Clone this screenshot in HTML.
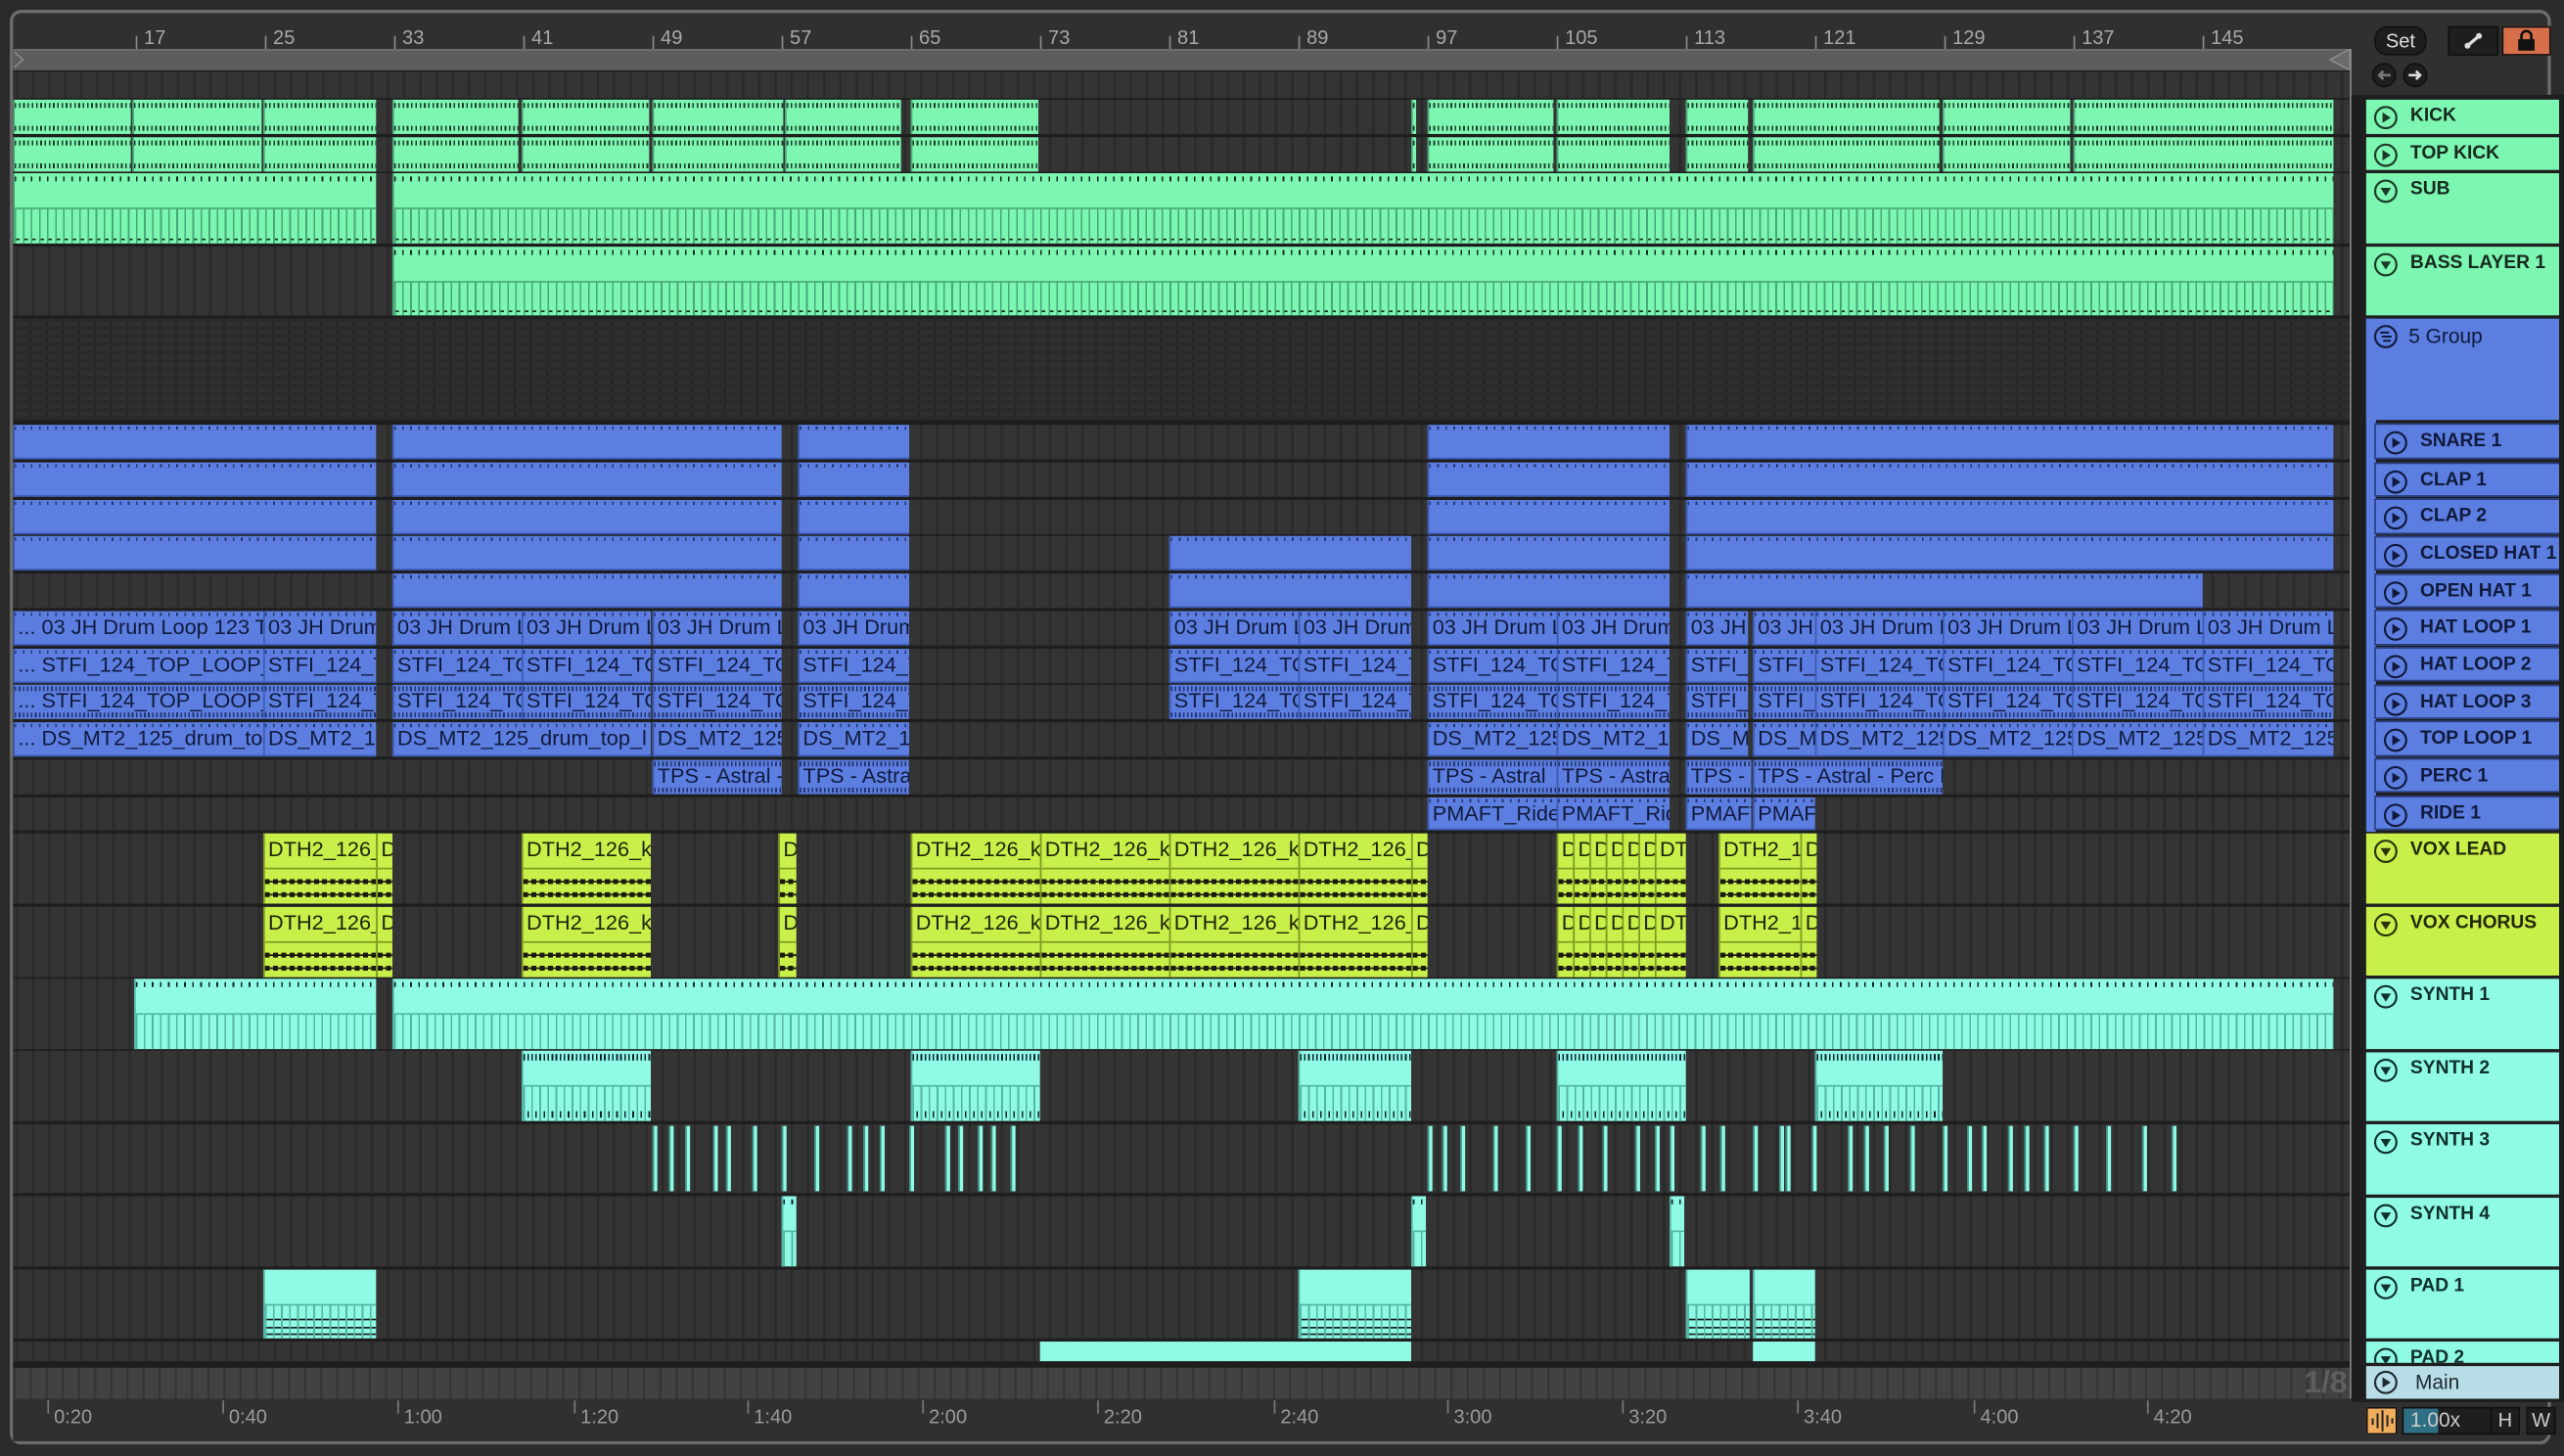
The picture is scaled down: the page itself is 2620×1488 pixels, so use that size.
<!DOCTYPE html>
<html><head><meta charset="utf-8"><style>
*{margin:0;padding:0}
i{font-style:normal}
html,body{width:2620px;height:1488px;overflow:hidden;background:#2b2b2b}
#s{position:absolute;left:0;top:0;width:1568px;height:891px;transform:scale(1.67092,1.67);transform-origin:0 0;font-family:"Liberation Sans",sans-serif}
.frame{position:absolute;left:6px;top:6px;width:1554px;height:878px;border:2px solid #6c6c6c;border-radius:7px;background:#303030;box-sizing:border-box}
.lbl{position:absolute;top:16px;font-size:12px;color:#a8a8a8}
.lbl:before{content:"";position:absolute;left:-5px;top:6px;width:1px;height:8px;background:#8a8a8a}
.loop{position:absolute;left:8px;top:30px;width:1430px;height:12px;background:#5d5d5d;border-top:1px solid #6f6f6f;border-bottom:1px solid #7a7a7a}
.area{position:absolute;left:8px;top:43px;width:1430px;height:814px;background:#1e1e1e;overflow:hidden}
.row{position:absolute;left:0;width:1430px;background:repeating-linear-gradient(90deg,#2a2a2a 0 1.6px,#343434 1.6px 9.875px);background-position:1.5px 0}
.c{position:absolute;top:0;bottom:0;overflow:hidden;box-sizing:border-box;white-space:nowrap;font-style:normal}
.g{background:repeating-linear-gradient(90deg,#1b3a27 0 1px,transparent 1px 2.6px) 0 2px/100% 3px no-repeat,repeating-linear-gradient(90deg,#1b3a27 0 1px,transparent 1px 2.6px) 0 calc(100% - 2px)/100% 3px no-repeat,#7cf6b0;border-left:1px solid #4aa878}
.gh{background:linear-gradient(#47a877,#47a877) 0 50%/100% 1px no-repeat,repeating-linear-gradient(90deg,#47a877 0 1px,transparent 1px 4.94px) 0 100%/100% 50% no-repeat,repeating-linear-gradient(90deg,#152a1e 0 1px,transparent 1px 4.94px) 0 2px/100% 3px no-repeat,repeating-linear-gradient(90deg,#152a1e 0 3px,transparent 3px 4.94px) 0 calc(100% - 2px)/100% 1px no-repeat,#7cf6b0;border-left:1px solid #4aa878}
.b{background:repeating-linear-gradient(90deg,#24346f 0 1px,transparent 1px 4.94px) 0 1px/100% 2px no-repeat,#5b7ee0;border-left:1px solid #3c5bb5;border-bottom:1px solid #3c5bb5}
.bt{background:repeating-linear-gradient(90deg,#24346f 0 1px,transparent 1px 2.47px) 0 1px/100% 3px no-repeat,repeating-linear-gradient(90deg,#24346f 0 1px,transparent 1px 2.47px) 0 calc(100% - 1px)/100% 3px no-repeat,#5b7ee0;border-left:1px solid #3c5bb5}
.b span,.bt span{position:absolute;left:2px;top:3px;font-family:"Liberation Sans Narrow","Liberation Sans",sans-serif;font-size:13px;line-height:14px;color:#111a3c;font-style:normal}
.y{background:linear-gradient(#7c9a22,#7c9a22) 0 21px/100% 1px no-repeat,repeating-linear-gradient(90deg,#1a1a10 0 3px,transparent 3px 5px) 0 28px/100% 3px no-repeat,repeating-linear-gradient(90deg,#1a1a10 0 3px,transparent 3px 5px) 0 36px/100% 3px no-repeat,linear-gradient(#1a1a10,#1a1a10) 0 29px/100% 1px no-repeat,linear-gradient(#1a1a10,#1a1a10) 0 37px/100% 1px no-repeat,#c9ef4a;border-left:1px solid #7c9a22}
.y span{position:absolute;left:2px;top:3px;font-family:"Liberation Sans Narrow","Liberation Sans",sans-serif;font-size:13px;line-height:14px;color:#1d2208;font-style:normal}
.t{background:linear-gradient(#54b5a4,#54b5a4) 0 50%/100% 1px no-repeat,repeating-linear-gradient(90deg,#54b5a4 0 1px,transparent 1px 4.94px) 0 100%/100% 50% no-repeat,repeating-linear-gradient(90deg,#123 0 1px,transparent 1px 4.94px) 0 2px/100% 3px no-repeat,#8ffbe5;border-left:1px solid #54b5a4}
.t2{background:linear-gradient(#54b5a4,#54b5a4) 0 50%/100% 1px no-repeat,repeating-linear-gradient(90deg,#54b5a4 0 1px,transparent 1px 4.94px) 0 100%/100% 50% no-repeat,repeating-linear-gradient(90deg,#123 0 1px,transparent 1px 2.47px) 0 2px/100% 4px no-repeat,repeating-linear-gradient(90deg,#123 0 1px,transparent 1px 2.47px) 0 calc(100% - 2px)/100% 4px no-repeat,#8ffbe5;border-left:1px solid #54b5a4}
.tp{background:linear-gradient(#54b5a4,#54b5a4) 0 50%/100% 1px no-repeat,repeating-linear-gradient(90deg,#54b5a4 0 1px,transparent 1px 4.94px) 0 100%/100% 50% no-repeat,linear-gradient(#1a1a1a,#1a1a1a) 0 30px/100% 1px no-repeat,linear-gradient(#1a1a1a,#1a1a1a) 0 35px/100% 1px no-repeat,linear-gradient(#1a1a1a,#1a1a1a) 0 39px/100% 1px no-repeat,#8ffbe5;border-left:1px solid #54b5a4}
.sl{position:absolute;top:1px;bottom:1px;width:2px;background:#8ffbe5;border-left:1px solid #3f8a7e}
.hd{position:absolute;left:1447px;width:118px;box-sizing:border-box;font-weight:bold;font-size:11.5px;color:#17291f;letter-spacing:0;overflow:hidden;white-space:nowrap}
.hd svg{position:absolute;left:4px;top:3px}
.hd b{position:absolute;left:27px;top:4px}
.sub{left:1452px;width:113px}
.bl{background:#5b7ee0;color:#111a3c}
.gr{background:#7cf6b0}
.ye{background:#c9ef4a;color:#222806}
.cy{background:#8ffbe5;color:#10302b}
.tl{position:absolute;top:860px;font-size:12px;color:#9a9a9a}
.tl:before{content:"";position:absolute;left:-4px;top:-3px;width:1px;height:8px;background:#7a7a7a}
</style></head><body><div id="s">
<div class="frame"></div>
<div class="lbl" style="left:88px">17</div><div class="lbl" style="left:167px">25</div><div class="lbl" style="left:246px">33</div><div class="lbl" style="left:325px">41</div><div class="lbl" style="left:404px">49</div><div class="lbl" style="left:483px">57</div><div class="lbl" style="left:562px">65</div><div class="lbl" style="left:641px">73</div><div class="lbl" style="left:720px">81</div><div class="lbl" style="left:799px">89</div><div class="lbl" style="left:878px">97</div><div class="lbl" style="left:957px">105</div><div class="lbl" style="left:1036px">113</div><div class="lbl" style="left:1115px">121</div><div class="lbl" style="left:1194px">129</div><div class="lbl" style="left:1273px">137</div><div class="lbl" style="left:1352px">145</div>
<div class="loop"></div>
<svg style="position:absolute;left:8px;top:31px" width="8" height="11"><path d="M1 1 L6 5.5 L1 10" fill="none" stroke="#8a8a8a"/></svg>
<svg style="position:absolute;left:1424px;top:30px" width="14" height="13"><path d="M13 0 L1 6.5 L13 13 Z" fill="#6a6a6a" stroke="#8a8a8a"/></svg>
<div class="area">
<div class="row" style="top:1px;height:16px"></div>
<div class="row" style="top:18px;height:21px">
<i class="c g" style="left:0;width:72px"></i><i class="c g" style="left:73px;width:79px"></i><i class="c g" style="left:153px;width:69px"></i><i class="c g" style="left:232px;width:77px"></i><i class="c g" style="left:311px;width:78px"></i><i class="c g" style="left:391px;width:80px"></i><i class="c g" style="left:472px;width:71px"></i><i class="c g" style="left:549px;width:78px"></i><i class="c g" style="left:855px;width:3px"></i><i class="c g" style="left:865px;width:77px"></i><i class="c g" style="left:944px;width:69px"></i><i class="c g" style="left:1023px;width:38px"></i><i class="c g" style="left:1064px;width:114px"></i><i class="c g" style="left:1180px;width:78px"></i><i class="c g" style="left:1260px;width:159px"></i></div>
<div class="row" style="top:41px;height:21px">
<i class="c g" style="left:0;width:72px"></i><i class="c g" style="left:73px;width:79px"></i><i class="c g" style="left:153px;width:69px"></i><i class="c g" style="left:232px;width:77px"></i><i class="c g" style="left:311px;width:78px"></i><i class="c g" style="left:391px;width:80px"></i><i class="c g" style="left:472px;width:71px"></i><i class="c g" style="left:549px;width:78px"></i><i class="c g" style="left:855px;width:3px"></i><i class="c g" style="left:865px;width:77px"></i><i class="c g" style="left:944px;width:69px"></i><i class="c g" style="left:1023px;width:38px"></i><i class="c g" style="left:1064px;width:114px"></i><i class="c g" style="left:1180px;width:78px"></i><i class="c g" style="left:1260px;width:159px"></i></div>
<div class="row" style="top:63px;height:43px"><i class="c gh" style="left:0;width:222px"></i><i class="c gh" style="left:232px;width:1187px"></i></div>
<div class="row" style="top:108px;height:42px"><i class="c gh" style="left:232px;width:1187px"></i></div>
<div class="row" style="top:152px;height:62px;background:repeating-linear-gradient(#2a2a2a 0 2px,transparent 2px 5px),repeating-linear-gradient(90deg,#262626 0 1.6px,#2f2f2f 1.6px 9.875px)"></div>
<div class="row" style="top:217px;height:21px"><i class="c b" style="left:0;width:222px"></i><i class="c b" style="left:232px;width:238px"></i><i class="c b" style="left:480px;width:68px"></i><i class="c b" style="left:865px;width:148px"></i><i class="c b" style="left:1023px;width:396px"></i></div>
<div class="row" style="top:240px;height:21px"><i class="c b" style="left:0;width:222px"></i><i class="c b" style="left:232px;width:238px"></i><i class="c b" style="left:480px;width:68px"></i><i class="c b" style="left:865px;width:148px"></i><i class="c b" style="left:1023px;width:396px"></i></div>
<div class="row" style="top:263px;height:21px"><i class="c b" style="left:0;width:222px"></i><i class="c b" style="left:232px;width:238px"></i><i class="c b" style="left:480px;width:68px"></i><i class="c b" style="left:865px;width:148px"></i><i class="c b" style="left:1023px;width:396px"></i></div>
<div class="row" style="top:285px;height:21px"><i class="c b" style="left:0;width:222px"></i><i class="c b" style="left:232px;width:238px"></i><i class="c b" style="left:480px;width:68px"></i><i class="c b" style="left:707px;width:148px"></i><i class="c b" style="left:865px;width:148px"></i><i class="c b" style="left:1023px;width:396px"></i></div>
<div class="row" style="top:308px;height:21px"><i class="c b" style="left:232px;width:238px"></i><i class="c b" style="left:480px;width:68px"></i><i class="c b" style="left:707px;width:148px"></i><i class="c b" style="left:865px;width:148px"></i><i class="c b" style="left:1023px;width:316px"></i></div>
<div class="row" style="top:331px;height:21px">
<i class="c b" style="left:0;width:153px"><span>... 03 JH Drum Loop 123 To</span></i><i class="c b" style="left:153px;width:69px"><span>03 JH Drum</span></i><i class="c b" style="left:232px;width:79px"><span>03 JH Drum L</span></i><i class="c b" style="left:311px;width:79px"><span>03 JH Drum L</span></i><i class="c b" style="left:391px;width:79px"><span>03 JH Drum L</span></i><i class="c b" style="left:480px;width:68px"><span>03 JH Drum</span></i><i class="c b" style="left:707px;width:79px"><span>03 JH Drum L</span></i><i class="c b" style="left:786px;width:69px"><span>03 JH Drum</span></i><i class="c b" style="left:865px;width:79px"><span>03 JH Drum L</span></i><i class="c b" style="left:944px;width:69px"><span>03 JH Drum</span></i><i class="c b" style="left:1023px;width:38px"><span>03 JH</span></i><i class="c b" style="left:1064px;width:38px"><span>03 JH</span></i><i class="c b" style="left:1102px;width:78px"><span>03 JH Drum L</span></i><i class="c b" style="left:1180px;width:79px"><span>03 JH Drum L</span></i><i class="c b" style="left:1259px;width:80px"><span>03 JH Drum L</span></i><i class="c b" style="left:1339px;width:80px"><span>03 JH Drum L</span></i></div>
<div class="row" style="top:354px;height:21px">
<i class="c b" style="left:0;width:153px"><span>... STFI_124_TOP_LOOP_T</span></i><i class="c b" style="left:153px;width:69px"><span>STFI_124_T</span></i><i class="c b" style="left:232px;width:79px"><span>STFI_124_TO</span></i><i class="c b" style="left:311px;width:79px"><span>STFI_124_TO</span></i><i class="c b" style="left:391px;width:79px"><span>STFI_124_TO</span></i><i class="c b" style="left:480px;width:68px"><span>STFI_124_T</span></i><i class="c b" style="left:707px;width:79px"><span>STFI_124_TO</span></i><i class="c b" style="left:786px;width:69px"><span>STFI_124_T</span></i><i class="c b" style="left:865px;width:79px"><span>STFI_124_TO</span></i><i class="c b" style="left:944px;width:69px"><span>STFI_124_T</span></i><i class="c b" style="left:1023px;width:38px"><span>STFI_1</span></i><i class="c b" style="left:1064px;width:38px"><span>STFI_</span></i><i class="c b" style="left:1102px;width:78px"><span>STFI_124_TO</span></i><i class="c b" style="left:1180px;width:79px"><span>STFI_124_TO</span></i><i class="c b" style="left:1259px;width:80px"><span>STFI_124_TO</span></i><i class="c b" style="left:1339px;width:80px"><span>STFI_124_TO</span></i></div>
<div class="row" style="top:376px;height:21px">
<i class="c bt" style="left:0;width:153px"><span>... STFI_124_TOP_LOOP_T</span></i><i class="c bt" style="left:153px;width:69px"><span>STFI_124_T</span></i><i class="c bt" style="left:232px;width:79px"><span>STFI_124_TO</span></i><i class="c bt" style="left:311px;width:79px"><span>STFI_124_TO</span></i><i class="c bt" style="left:391px;width:79px"><span>STFI_124_TO</span></i><i class="c bt" style="left:480px;width:68px"><span>STFI_124_T</span></i><i class="c bt" style="left:707px;width:79px"><span>STFI_124_TO</span></i><i class="c bt" style="left:786px;width:69px"><span>STFI_124_T</span></i><i class="c bt" style="left:865px;width:79px"><span>STFI_124_TO</span></i><i class="c bt" style="left:944px;width:69px"><span>STFI_124_T</span></i><i class="c bt" style="left:1023px;width:38px"><span>STFI_1</span></i><i class="c bt" style="left:1064px;width:38px"><span>STFI_</span></i><i class="c bt" style="left:1102px;width:78px"><span>STFI_124_TO</span></i><i class="c bt" style="left:1180px;width:79px"><span>STFI_124_TO</span></i><i class="c bt" style="left:1259px;width:80px"><span>STFI_124_TO</span></i><i class="c bt" style="left:1339px;width:80px"><span>STFI_124_TO</span></i></div>
<div class="row" style="top:399px;height:21px">
<i class="c b" style="left:0;width:153px"><span>... DS_MT2_125_drum_top</span></i><i class="c b" style="left:153px;width:69px"><span>DS_MT2_12</span></i><i class="c b" style="left:232px;width:158px"><span>DS_MT2_125_drum_top_l</span></i><i class="c b" style="left:391px;width:79px"><span>DS_MT2_125</span></i><i class="c b" style="left:480px;width:68px"><span>DS_MT2_12</span></i><i class="c b" style="left:865px;width:79px"><span>DS_MT2_125</span></i><i class="c b" style="left:944px;width:69px"><span>DS_MT2_12</span></i><i class="c b" style="left:1023px;width:38px"><span>DS_M</span></i><i class="c b" style="left:1064px;width:38px"><span>DS_M</span></i><i class="c b" style="left:1102px;width:78px"><span>DS_MT2_125</span></i><i class="c b" style="left:1180px;width:79px"><span>DS_MT2_125</span></i><i class="c b" style="left:1259px;width:80px"><span>DS_MT2_125</span></i><i class="c b" style="left:1339px;width:80px"><span>DS_MT2_125</span></i></div>
<div class="row" style="top:422px;height:21px">
<i class="c bt" style="left:391px;width:79px"><span>TPS - Astral -</span></i><i class="c bt" style="left:480px;width:68px"><span>TPS - Astra</span></i><i class="c bt" style="left:865px;width:79px"><span>TPS - Astral</span></i><i class="c bt" style="left:944px;width:69px"><span>TPS - Astra</span></i><i class="c bt" style="left:1023px;width:40px"><span>TPS - /</span></i><i class="c bt" style="left:1064px;width:116px"><span>TPS - Astral - Perc L</span></i></div>
<div class="row" style="top:445px;height:20px">
<i class="c b" style="left:865px;width:79px"><span>PMAFT_Ride</span></i><i class="c b" style="left:944px;width:69px"><span>PMAFT_Rid</span></i><i class="c b" style="left:1023px;width:40px"><span>PMAFT</span></i><i class="c b" style="left:1064px;width:38px"><span>PMAF</span></i></div>
<div class="row" style="top:467px;height:43px">
<i class="c y" style="left:153px;width:69px"><span>DTH2_126_</span></i><i class="c y" style="left:222px;width:10px"><span>D</span></i><i class="c y" style="left:311px;width:79px"><span>DTH2_126_ki</span></i><i class="c y" style="left:468px;width:11px"><span>D</span></i><i class="c y" style="left:549px;width:79px"><span>DTH2_126_ki</span></i><i class="c y" style="left:628px;width:79px"><span>DTH2_126_ki</span></i><i class="c y" style="left:707px;width:79px"><span>DTH2_126_ki</span></i><i class="c y" style="left:786px;width:69px"><span>DTH2_126_</span></i><i class="c y" style="left:855px;width:10px"><span>D</span></i><i class="c y" style="left:944px;width:10px"><span>D</span></i><i class="c y" style="left:954px;width:10px"><span>D</span></i><i class="c y" style="left:964px;width:10px"><span>D</span></i><i class="c y" style="left:974px;width:10px"><span>D</span></i><i class="c y" style="left:984px;width:10px"><span>D</span></i><i class="c y" style="left:994px;width:10px"><span>D</span></i><i class="c y" style="left:1004px;width:19px"><span>DT</span></i><i class="c y" style="left:1043px;width:50px"><span>DTH2_1</span></i><i class="c y" style="left:1093px;width:10px"><span>D</span></i></div>
<div class="row" style="top:512px;height:43px">
<i class="c y" style="left:153px;width:69px"><span>DTH2_126_</span></i><i class="c y" style="left:222px;width:10px"><span>D</span></i><i class="c y" style="left:311px;width:79px"><span>DTH2_126_ki</span></i><i class="c y" style="left:468px;width:11px"><span>D</span></i><i class="c y" style="left:549px;width:79px"><span>DTH2_126_ki</span></i><i class="c y" style="left:628px;width:79px"><span>DTH2_126_ki</span></i><i class="c y" style="left:707px;width:79px"><span>DTH2_126_ki</span></i><i class="c y" style="left:786px;width:69px"><span>DTH2_126_</span></i><i class="c y" style="left:855px;width:10px"><span>D</span></i><i class="c y" style="left:944px;width:10px"><span>D</span></i><i class="c y" style="left:954px;width:10px"><span>D</span></i><i class="c y" style="left:964px;width:10px"><span>D</span></i><i class="c y" style="left:974px;width:10px"><span>D</span></i><i class="c y" style="left:984px;width:10px"><span>D</span></i><i class="c y" style="left:994px;width:10px"><span>D</span></i><i class="c y" style="left:1004px;width:19px"><span>DT</span></i><i class="c y" style="left:1043px;width:50px"><span>DTH2_1</span></i><i class="c y" style="left:1093px;width:10px"><span>D</span></i></div>
<div class="row" style="top:556px;height:43px"><i class="c t" style="left:74px;width:148px"></i><i class="c t" style="left:232px;width:1187px"></i></div>
<div class="row" style="top:600px;height:43px"><i class="c t2" style="left:311px;width:79px"></i><i class="c t2" style="left:549px;width:79px"></i><i class="c t2" style="left:786px;width:69px"></i><i class="c t2" style="left:944px;width:79px"></i><i class="c t2" style="left:1102px;width:78px"></i></div>
<div class="row" style="top:645px;height:42px">
<i class="sl" style="left:391px"></i><i class="sl" style="left:401px"></i><i class="sl" style="left:411px"></i><i class="sl" style="left:428px"></i><i class="sl" style="left:436px"></i><i class="sl" style="left:452px"></i><i class="sl" style="left:470px"></i><i class="sl" style="left:490px"></i><i class="sl" style="left:510px"></i><i class="sl" style="left:520px"></i><i class="sl" style="left:530px"></i><i class="sl" style="left:548px"></i><i class="sl" style="left:570px"></i><i class="sl" style="left:578px"></i><i class="sl" style="left:590px"></i><i class="sl" style="left:598px"></i><i class="sl" style="left:610px"></i><i class="sl" style="left:865px"></i><i class="sl" style="left:874px"></i><i class="sl" style="left:885px"></i><i class="sl" style="left:905px"></i><i class="sl" style="left:925px"></i><i class="sl" style="left:944px"></i><i class="sl" style="left:957px"></i><i class="sl" style="left:972px"></i><i class="sl" style="left:992px"></i><i class="sl" style="left:1004px"></i><i class="sl" style="left:1013px"></i><i class="sl" style="left:1032px"></i><i class="sl" style="left:1044px"></i><i class="sl" style="left:1064px"></i><i class="sl" style="left:1080px"></i><i class="sl" style="left:1084px"></i><i class="sl" style="left:1100px"></i><i class="sl" style="left:1122px"></i><i class="sl" style="left:1132px"></i><i class="sl" style="left:1144px"></i><i class="sl" style="left:1160px"></i><i class="sl" style="left:1180px"></i><i class="sl" style="left:1195px"></i><i class="sl" style="left:1204px"></i><i class="sl" style="left:1220px"></i><i class="sl" style="left:1230px"></i><i class="sl" style="left:1242px"></i><i class="sl" style="left:1260px"></i><i class="sl" style="left:1280px"></i><i class="sl" style="left:1302px"></i><i class="sl" style="left:1320px"></i></div>
<div class="row" style="top:689px;height:43px"><i class="c t" style="left:470px;width:9px"></i><i class="c t" style="left:855px;width:9px"></i><i class="c t" style="left:1013px;width:9px"></i></div>
<div class="row" style="top:734px;height:42px"><i class="c tp" style="left:153px;width:69px"></i><i class="c tp" style="left:786px;width:69px"></i><i class="c tp" style="left:1023px;width:39px"></i><i class="c tp" style="left:1064px;width:38px"></i></div>
<div class="row" style="top:778px;height:12px"><i class="c" style="left:628px;width:227px;background:#8ffbe5"></i><i class="c" style="left:1064px;width:38px;background:#8ffbe5"></i></div>
<div class="row" style="top:794px;height:19px;background:repeating-linear-gradient(90deg,#363636 0 1.6px,#424242 1.6px 9.875px)"></div>
</div>
<div style="position:absolute;left:1437px;top:30px;width:1px;height:826px;background:#8a8a8a"></div>
<div style="position:absolute;left:1409px;top:836px;font-size:19px;font-weight:bold;color:#5e5e5e">1/8</div>
<div style="position:absolute;left:8px;top:856px;width:1430px;height:26px;background:#303030"></div>
<div class="tl" style="left:33px">0:20</div><div class="tl" style="left:140px">0:40</div><div class="tl" style="left:247px">1:00</div><div class="tl" style="left:355px">1:20</div><div class="tl" style="left:461px">1:40</div><div class="tl" style="left:568px">2:00</div><div class="tl" style="left:675px">2:20</div><div class="tl" style="left:783px">2:40</div><div class="tl" style="left:889px">3:00</div><div class="tl" style="left:996px">3:20</div><div class="tl" style="left:1103px">3:40</div><div class="tl" style="left:1211px">4:00</div><div class="tl" style="left:1317px">4:20</div>
<div style="position:absolute;left:1452px;top:16px;width:30px;height:16px;border-radius:8px;background:#1e1e1e;border:1px solid #111;color:#ddd;font-size:12px;text-align:center;line-height:16px">Set</div>
<div style="position:absolute;left:1497px;top:16px;width:29px;height:16px;background:#1e1e1e;border:1px solid #111"><svg width="29" height="16"><path d="M11 11 L18 5" stroke="#ddd" stroke-width="2"/><circle cx="11" cy="11" r="1.8" fill="#ddd"/><circle cx="18" cy="5" r="1.8" fill="#ddd"/></svg></div>
<div style="position:absolute;left:1530px;top:16px;width:28px;height:16px;background:#d86f4b;border:1px solid #111"><svg width="28" height="16"><rect x="9" y="7" width="10" height="7" fill="#111"/><path d="M11 7 V5 A3 3 0 0 1 17 5 V7" fill="none" stroke="#111" stroke-width="1.6"/></svg></div>
<svg style="position:absolute;left:1450px;top:37px" width="36" height="18"><circle cx="8" cy="9" r="7" fill="#1e1e1e" stroke="#111"/><path d="M12 9 H5 M7.5 6.5 L5 9 L7.5 11.5" stroke="#777" stroke-width="1.6" fill="none"/><circle cx="27" cy="9" r="7" fill="#1e1e1e" stroke="#111"/><path d="M23 9 H30 M27.5 6.5 L30 9 L27.5 11.5" stroke="#ddd" stroke-width="1.6" fill="none"/></svg>
<div style="position:absolute;left:1438px;top:58px;width:130px;height:800px;background:#1e1e1e"></div>
<div style="position:absolute;left:1447px;top:195px;width:6px;height:314px;background:#5b7ee0"></div>
<div class="hd gr" style="top:61px;height:21px"><svg width="16" height="16"><circle cx="8" cy="8" r="6.5" fill="none" stroke="#1b3a28" stroke-width="1.3"/><path d="M6 4.8 L11 8 L6 11.2Z" fill="#1b3a28"/></svg><b>KICK</b></div>
<div class="hd gr" style="top:84px;height:20px"><svg width="16" height="16"><circle cx="8" cy="8" r="6.5" fill="none" stroke="#1b3a28" stroke-width="1.3"/><path d="M6 4.8 L11 8 L6 11.2Z" fill="#1b3a28"/></svg><b>TOP KICK</b></div>
<div class="hd gr" style="top:106px;height:43px"><svg width="16" height="16"><circle cx="8" cy="8" r="6.5" fill="none" stroke="#1b3a28" stroke-width="1.3"/><path d="M4.8 6 L11.2 6 L8 11Z" fill="#1b3a28"/></svg><b>SUB</b></div>
<div class="hd gr" style="top:151px;height:42px"><svg width="16" height="16"><circle cx="8" cy="8" r="6.5" fill="none" stroke="#1b3a28" stroke-width="1.3"/><path d="M4.8 6 L11.2 6 L8 11Z" fill="#1b3a28"/></svg><b>BASS LAYER 1</b></div>
<div class="hd bl" style="top:195px;height:62px"><svg width="16" height="16"><circle cx="8" cy="8" r="6.5" fill="none" stroke="#111a3c" stroke-width="1.3"/><path d="M4.5 5.5 H10 M5.5 8 H11.5 M6.5 10.5 H11" stroke="#111a3c" stroke-width="1.2"/></svg><b style="left:26px;font-weight:normal;font-size:12.5px">5 Group</b></div>
<div class="hd bl sub" style="top:259px;height:22px;border:1px solid #2b3f80;border-right:0"><svg width="16" height="16"><circle cx="8" cy="8" r="6.5" fill="none" stroke="#111a3c" stroke-width="1.3"/><path d="M6 4.8 L11 8 L6 11.2Z" fill="#111a3c"/></svg><b>SNARE 1</b></div>
<div class="hd bl sub" style="top:283px;height:21px;border:1px solid #2b3f80;border-right:0"><svg width="16" height="16"><circle cx="8" cy="8" r="6.5" fill="none" stroke="#111a3c" stroke-width="1.3"/><path d="M6 4.8 L11 8 L6 11.2Z" fill="#111a3c"/></svg><b>CLAP 1</b></div>
<div class="hd bl sub" style="top:305px;height:22px;border:1px solid #2b3f80;border-right:0"><svg width="16" height="16"><circle cx="8" cy="8" r="6.5" fill="none" stroke="#111a3c" stroke-width="1.3"/><path d="M6 4.8 L11 8 L6 11.2Z" fill="#111a3c"/></svg><b>CLAP 2</b></div>
<div class="hd bl sub" style="top:328px;height:21px;border:1px solid #2b3f80;border-right:0"><svg width="16" height="16"><circle cx="8" cy="8" r="6.5" fill="none" stroke="#111a3c" stroke-width="1.3"/><path d="M6 4.8 L11 8 L6 11.2Z" fill="#111a3c"/></svg><b>CLOSED HAT 1</b></div>
<div class="hd bl sub" style="top:351px;height:21px;border:1px solid #2b3f80;border-right:0"><svg width="16" height="16"><circle cx="8" cy="8" r="6.5" fill="none" stroke="#111a3c" stroke-width="1.3"/><path d="M6 4.8 L11 8 L6 11.2Z" fill="#111a3c"/></svg><b>OPEN HAT 1</b></div>
<div class="hd bl sub" style="top:373px;height:22px;border:1px solid #2b3f80;border-right:0"><svg width="16" height="16"><circle cx="8" cy="8" r="6.5" fill="none" stroke="#111a3c" stroke-width="1.3"/><path d="M6 4.8 L11 8 L6 11.2Z" fill="#111a3c"/></svg><b>HAT LOOP 1</b></div>
<div class="hd bl sub" style="top:396px;height:21px;border:1px solid #2b3f80;border-right:0"><svg width="16" height="16"><circle cx="8" cy="8" r="6.5" fill="none" stroke="#111a3c" stroke-width="1.3"/><path d="M6 4.8 L11 8 L6 11.2Z" fill="#111a3c"/></svg><b>HAT LOOP 2</b></div>
<div class="hd bl sub" style="top:419px;height:21px;border:1px solid #2b3f80;border-right:0"><svg width="16" height="16"><circle cx="8" cy="8" r="6.5" fill="none" stroke="#111a3c" stroke-width="1.3"/><path d="M6 4.8 L11 8 L6 11.2Z" fill="#111a3c"/></svg><b>HAT LOOP 3</b></div>
<div class="hd bl sub" style="top:441px;height:22px;border:1px solid #2b3f80;border-right:0"><svg width="16" height="16"><circle cx="8" cy="8" r="6.5" fill="none" stroke="#111a3c" stroke-width="1.3"/><path d="M6 4.8 L11 8 L6 11.2Z" fill="#111a3c"/></svg><b>TOP LOOP 1</b></div>
<div class="hd bl sub" style="top:464px;height:21px;border:1px solid #2b3f80;border-right:0"><svg width="16" height="16"><circle cx="8" cy="8" r="6.5" fill="none" stroke="#111a3c" stroke-width="1.3"/><path d="M6 4.8 L11 8 L6 11.2Z" fill="#111a3c"/></svg><b>PERC 1</b></div>
<div class="hd bl sub" style="top:487px;height:21px;border:1px solid #2b3f80;border-right:0"><svg width="16" height="16"><circle cx="8" cy="8" r="6.5" fill="none" stroke="#111a3c" stroke-width="1.3"/><path d="M6 4.8 L11 8 L6 11.2Z" fill="#111a3c"/></svg><b>RIDE 1</b></div>
<div class="hd ye" style="top:510px;height:43px"><svg width="16" height="16"><circle cx="8" cy="8" r="6.5" fill="none" stroke="#2a3208" stroke-width="1.3"/><path d="M4.8 6 L11.2 6 L8 11Z" fill="#2a3208"/></svg><b>VOX LEAD</b></div>
<div class="hd ye" style="top:555px;height:42px"><svg width="16" height="16"><circle cx="8" cy="8" r="6.5" fill="none" stroke="#2a3208" stroke-width="1.3"/><path d="M4.8 6 L11.2 6 L8 11Z" fill="#2a3208"/></svg><b>VOX CHORUS</b></div>
<div class="hd cy" style="top:599px;height:43px"><svg width="16" height="16"><circle cx="8" cy="8" r="6.5" fill="none" stroke="#10302b" stroke-width="1.3"/><path d="M4.8 6 L11.2 6 L8 11Z" fill="#10302b"/></svg><b>SYNTH 1</b></div>
<div class="hd cy" style="top:644px;height:42px"><svg width="16" height="16"><circle cx="8" cy="8" r="6.5" fill="none" stroke="#10302b" stroke-width="1.3"/><path d="M4.8 6 L11.2 6 L8 11Z" fill="#10302b"/></svg><b>SYNTH 2</b></div>
<div class="hd cy" style="top:688px;height:43px"><svg width="16" height="16"><circle cx="8" cy="8" r="6.5" fill="none" stroke="#10302b" stroke-width="1.3"/><path d="M4.8 6 L11.2 6 L8 11Z" fill="#10302b"/></svg><b>SYNTH 3</b></div>
<div class="hd cy" style="top:733px;height:42px"><svg width="16" height="16"><circle cx="8" cy="8" r="6.5" fill="none" stroke="#10302b" stroke-width="1.3"/><path d="M4.8 6 L11.2 6 L8 11Z" fill="#10302b"/></svg><b>SYNTH 4</b></div>
<div class="hd cy" style="top:777px;height:42px"><svg width="16" height="16"><circle cx="8" cy="8" r="6.5" fill="none" stroke="#10302b" stroke-width="1.3"/><path d="M4.8 6 L11.2 6 L8 11Z" fill="#10302b"/></svg><b>PAD 1</b></div>
<div class="hd cy" style="top:821px;height:13px;overflow:hidden"><svg width="16" height="16"><circle cx="8" cy="8" r="6.5" fill="none" stroke="#10302b" stroke-width="1.3"/><path d="M4.8 6 L11.2 6 L8 11Z" fill="#10302b"/></svg><b>PAD 2</b></div>
<div class="hd" style="top:836px;height:20px;background:#b9dde6;color:#1e2a2e"><svg width="16" height="16" style="top:2px"><circle cx="8" cy="8" r="6.5" fill="none" stroke="#1e2a2e" stroke-width="1.3"/><path d="M6 4.8 L11 8 L6 11.2Z" fill="#1e2a2e"/></svg><b style="left:30px;top:3px;font-weight:normal;font-size:12.5px">Main</b></div>
<div style="position:absolute;left:1447px;top:861px;width:19px;height:17px;background:#f0ad5c;border:1px solid #111;box-sizing:border-box"><svg width="17" height="15"><path d="M3 6v4M6 3v9M9 1v13M12 4v7M15 6v3" stroke="#222" stroke-width="1.2"/></svg></div>
<div style="position:absolute;left:1469px;top:861px;width:55px;height:17px;background:#1e1e1e;border:1px solid #111;box-sizing:border-box;font-size:12.5px;color:#ccc;line-height:15px"><span style="position:absolute;left:0;top:0;width:21px;height:15px;background:#2f6f83"></span><span style="position:relative;left:4px">1.00x</span></div>
<div style="position:absolute;left:1523px;top:861px;width:18px;height:17px;background:#1e1e1e;border:1px solid #111;box-sizing:border-box;font-size:12px;color:#ccc;text-align:center;line-height:15px">H</div>
<div style="position:absolute;left:1545px;top:861px;width:18px;height:17px;background:#1e1e1e;border:1px solid #111;box-sizing:border-box;font-size:12px;color:#ccc;text-align:center;line-height:15px">W</div>
<div style="position:absolute;left:0;top:884px;width:1568px;height:7px;background:#2b2b2b"></div>
</div></body></html>
